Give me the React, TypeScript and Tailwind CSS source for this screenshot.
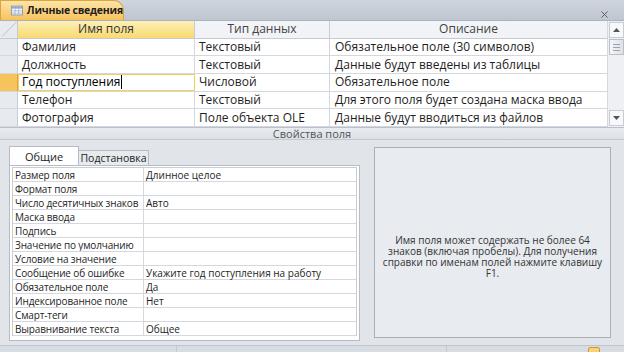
import { X } from 'lucide-react';

const rows = [
  { name: 'Фамилия', type: 'Текстовый', desc: 'Обязательное поле (30 символов)' },
  { name: 'Должность', type: 'Текстовый', desc: 'Данные будут введены из таблицы' },
  { name: 'Год поступления', type: 'Числовой', desc: 'Обязательное поле', active: true },
  { name: 'Телефон', type: 'Текстовый', desc: 'Для этого поля будет создана маска ввода' },
  { name: 'Фотография', type: 'Поле объекта OLE', desc: 'Данные будут вводиться из файлов' },
];

const props = [
  ['Размер поля', 'Длинное целое'],
  ['Формат поля', ''],
  ['Число десятичных знаков', 'Авто'],
  ['Маска ввода', ''],
  ['Подпись', ''],
  ['Значение по умолчанию', ''],
  ['Условие на значение', ''],
  ['Сообщение об ошибке', 'Укажите год поступления на работу'],
  ['Обязательное поле', 'Да'],
  ['Индексированное поле', 'Нет'],
  ['Смарт-теги', ''],
  ['Выравнивание текста', 'Общее'],
];

function TableIcon() {
  return (
    <svg width="16" height="13" viewBox="0 0 16 13">
      <rect x="0.5" y="0.5" width="15" height="12" fill="#fff" stroke="#6c87b0" />
      <rect x="1" y="1" width="14" height="3" fill="#8fa9cf" />
      <path d="M1 7h14M1 10h14M5.5 4v8M10.5 4v8" stroke="#8fa9cf" />
    </svg>
  );
}

export default function App() {
  return (
    <div
      className="w-[624px] h-[352px] overflow-hidden bg-[#e1e5ea] flex flex-col text-[#1e1e1e]"
      style={{ fontFamily: '"Open Sans", "Noto Sans", sans-serif' }}
    >
      {/* tab strip */}
      <div className="h-[21px] flex items-end bg-gradient-to-b from-[#cfd5dd] to-[#bfc6cf] border-b border-[#a9b3bf] relative">
        <div className="h-[20px] w-[124px] flex items-center gap-[4px] pl-[10px] rounded-tr-[10px] bg-gradient-to-b from-[#fde5a6] to-[#f7c25a] border border-[#d9a441] border-b-0">
          <TableIcon />
          <span className="text-[10.5px] font-bold leading-none whitespace-nowrap tracking-[-0.2px]">Личные сведения</span>
        </div>
        <X size={11} strokeWidth={2} className="absolute right-[14px] top-[9px] text-[#555]" />
      </div>

      {/* design grid */}
      <div className="flex h-[107px] bg-white border-b border-[#b9c1cc]">
        <div className="flex-1 flex flex-col text-[12px] leading-none">
          <div className="flex h-[18px] border-b border-[#c5cbd3]">
            <div className="w-[18px] bg-[#e7eaee] border-r border-[#c5cbd3] relative overflow-hidden">
              <div className="absolute w-[1px] h-[20px] bg-[#c9ced6] rotate-45 left-[9px] top-[-2px]" />
            </div>
            <div className="w-[177px] flex items-center justify-center bg-gradient-to-b from-[#fdf0b6] to-[#f9d96e] border-r border-[#c5cbd3] text-[#333]">
              Имя поля
            </div>
            <div className="w-[135px] flex items-center justify-center bg-[#f1f3f6] border-r border-[#c5cbd3] text-[#444]">
              Тип данных
            </div>
            <div className="flex-1 flex items-center justify-center bg-[#f1f3f6] text-[#444]">Описание</div>
          </div>
          {rows.map((r) => (
            <div key={r.name} className="flex h-[18px] border-b border-[#d4d8de]">
              <div
                className={
                  r.active
                    ? 'w-[18px] bg-[#f6c45a] border-r border-[#d9a441]'
                    : 'w-[18px] bg-[#e7eaee] border-r border-[#c5cbd3]'
                }
              />
              <div
                className={
                  r.active
                    ? 'w-[177px] flex items-center pl-[3px] border border-[#f1cf5b] text-black'
                    : 'w-[177px] flex items-center pl-[4px] border-r border-[#d4d8de]'
                }
              >
                {r.name}
                {r.active && <span className="w-[1px] h-[14px] bg-black ml-[1px]" />}
              </div>
              <div className="w-[135px] flex items-center pl-[4px] border-r border-[#d4d8de]">{r.type}</div>
              <div className="flex-1 flex items-center pl-[5px]">{r.desc}</div>
            </div>
          ))}
        </div>
        {/* scrollbar */}
        <div className="w-[17px] bg-[#eef0f3] border-l border-[#d4d8de] flex flex-col items-center">
          <div className="w-[15px] h-[16px] mt-[1px] flex items-center justify-center border border-[#c7ccd3] bg-[#f7f8fa]">
            <svg width="7" height="4" viewBox="0 0 7 4"><path d="M0 4L3.5 0L7 4Z" fill="#555" /></svg>
          </div>
          <div className="w-[15px] h-[16px] mt-[1px] border border-[#b9c0c9] bg-gradient-to-r from-[#f4f5f7] to-[#dde1e6] flex flex-col items-center justify-center gap-[2px]">
            <div className="w-[7px] h-[1px] bg-[#9aa3ae]" />
            <div className="w-[7px] h-[1px] bg-[#9aa3ae]" />
            <div className="w-[7px] h-[1px] bg-[#9aa3ae]" />
          </div>
          <div className="flex-1" />
          <div className="w-[15px] h-[16px] mb-[1px] flex items-center justify-center border border-[#c7ccd3] bg-[#f7f8fa]">
            <svg width="7" height="4" viewBox="0 0 7 4"><path d="M0 0L3.5 4L7 0Z" fill="#555" /></svg>
          </div>
        </div>
      </div>

      {/* separator title */}
      <div className="h-[13px] flex items-center justify-center bg-gradient-to-b from-[#e9ecf0] to-[#dce1e7] border-b border-[#c3cad3] text-[11px] leading-none text-[#555]">
        Свойства поля
      </div>

      {/* properties area */}
      <div className="flex-1 flex gap-[14px] pl-[9px] pr-[13px] pt-[6px] pb-[4px]">
        <div className="w-[351px] flex flex-col">
          <div className="flex items-end h-[19px]">
            <div className="w-[70px] h-[19px] bg-white border border-[#b5bcc6] border-b-0 flex items-center justify-center text-[11px] leading-none">
              Общие
            </div>
            <div className="w-[70px] h-[15px] bg-[#e7eaee] border border-[#b5bcc6] border-l-0 border-b-0 flex items-center justify-center text-[10.5px] leading-none">
              Подстановка
            </div>
          </div>
          <div className="bg-white border border-[#b5bcc6] px-[2px] pt-[1px] pb-[4px]">
            <div className="border border-[#c9ced5] border-b-0">
              {props.map(([k, v]) => (
                <div key={k} className="flex h-[14px] border-b border-[#d4d8de] text-[10px] leading-none">
                  <div className="w-[131px] pl-[2px] flex items-center border-r border-[#d4d8de] whitespace-nowrap overflow-hidden tracking-[-0.15px]">{k}</div>
                  <div className="flex-1 pl-[2px] flex items-center whitespace-nowrap">{v}</div>
                </div>
              ))}
            </div>
          </div>
        </div>
        <div className="flex-1 mt-[1px] mb-[3px] bg-[#e8ebef] border border-[#a8b0ba] flex items-center justify-center px-[3px] pt-[28px]">
          <p className="text-[10px] leading-[11px] text-center text-[#333]">
            Имя поля может содержать не более 64 знаков (включая пробелы). Для получения справки по именам полей нажмите клавишу F1.
          </p>
        </div>
      </div>

      {/* status strip */}
      <div className="h-[7px] bg-[#d8dde4] border-t border-[#bcc4ce] relative">
        <div className="absolute left-[176px] top-0 w-[1px] h-[7px] bg-[#c2c9d2]" />
        <div className="absolute left-[446px] top-0 w-[1px] h-[7px] bg-[#c2c9d2]" />
        <div className="absolute left-[588px] top-[1px] w-[12px] h-[8px] rounded-[2px] border border-[#c89a2f] bg-[#f8d37a]" />
      </div>
    </div>
  );
}
